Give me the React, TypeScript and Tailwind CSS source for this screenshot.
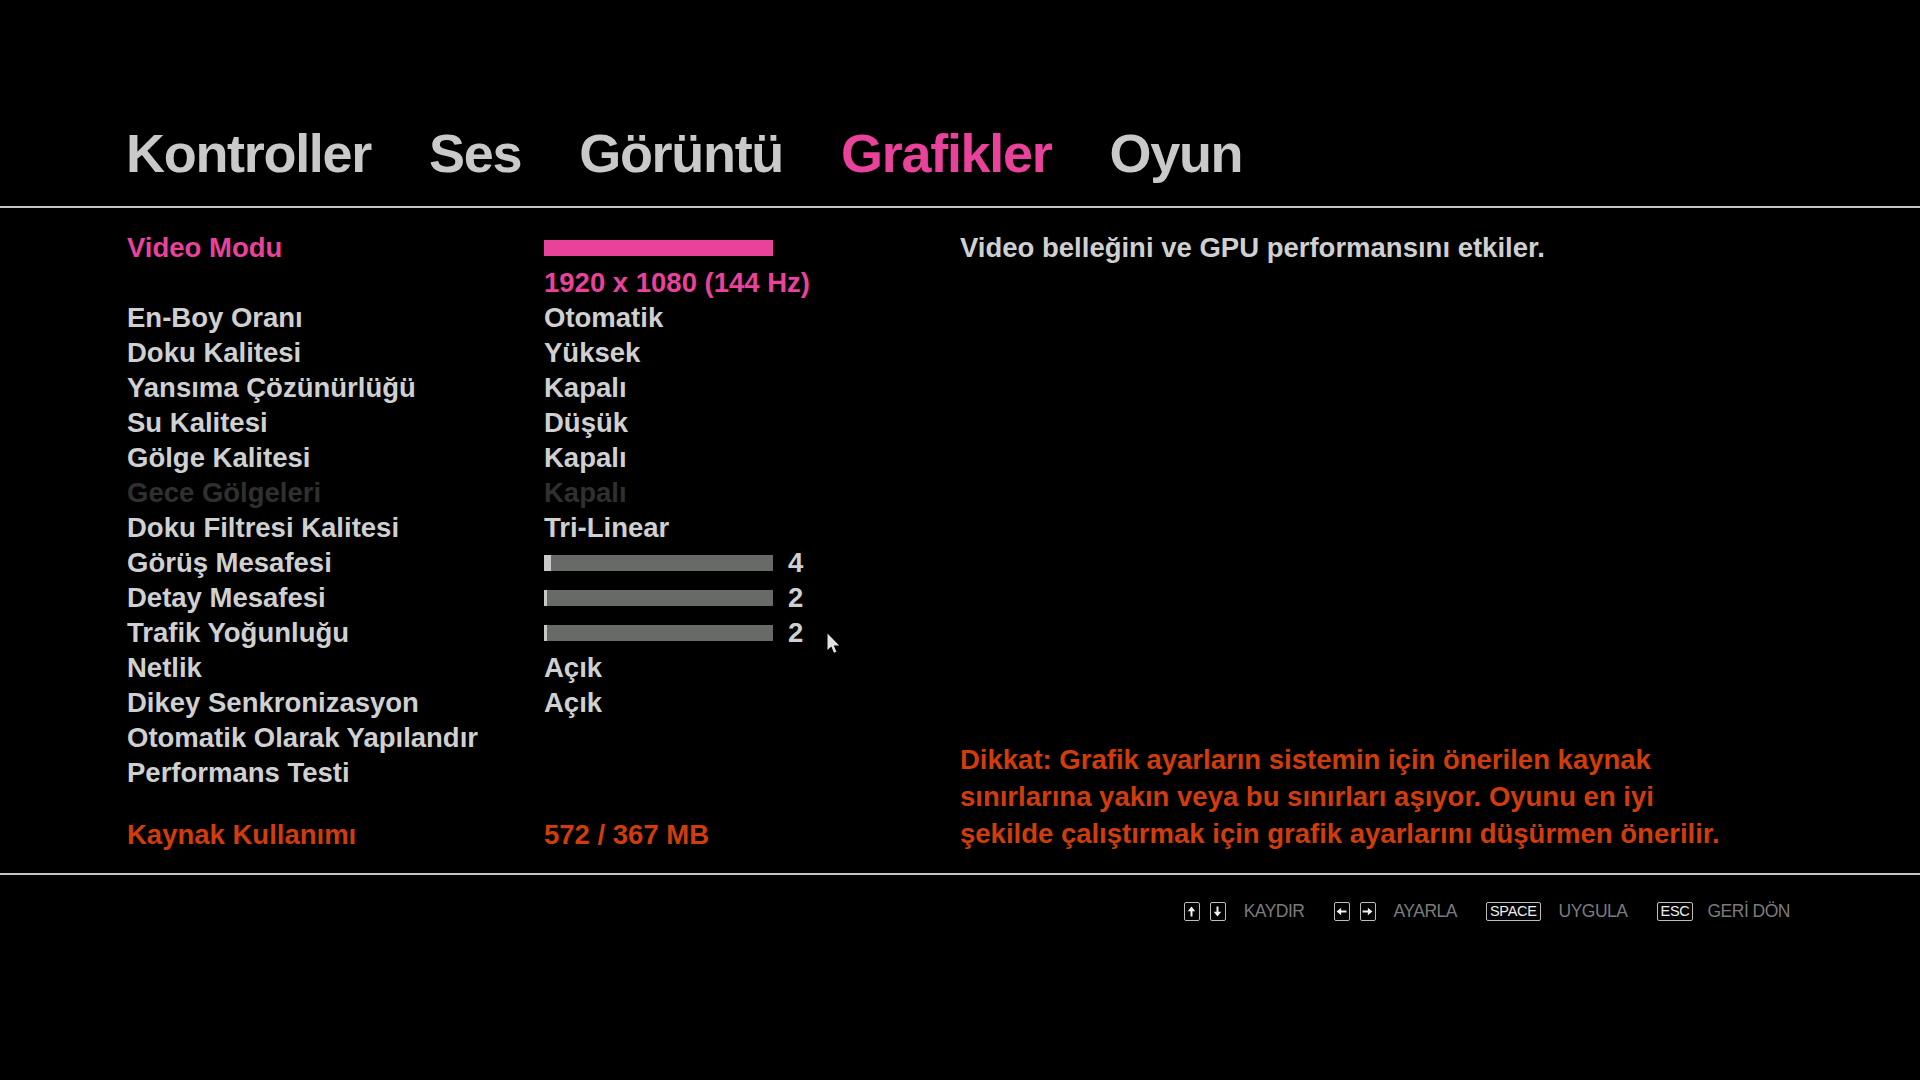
import React from "react";

type Setting = {
  label: string;
  value?: string;
  slider?: { level: number; tick: number };
  disabled?: boolean;
};

const tabs = ["Kontroller", "Ses", "Görüntü", "Grafikler", "Oyun"];
const activeTab = "Grafikler";

const settings: Setting[] = [
  { label: "En-Boy Oranı", value: "Otomatik" },
  { label: "Doku Kalitesi", value: "Yüksek" },
  { label: "Yansıma Çözünürlüğü", value: "Kapalı" },
  { label: "Su Kalitesi", value: "Düşük" },
  { label: "Gölge Kalitesi", value: "Kapalı" },
  { label: "Gece Gölgeleri", value: "Kapalı", disabled: true },
  { label: "Doku Filtresi Kalitesi", value: "Tri-Linear" },
  { label: "Görüş Mesafesi", slider: { level: 4, tick: 7 } },
  { label: "Detay Mesafesi", slider: { level: 2, tick: 3 } },
  { label: "Trafik Yoğunluğu", slider: { level: 2, tick: 3 } },
  { label: "Netlik", value: "Açık" },
  { label: "Dikey Senkronizasyon", value: "Açık" },
  { label: "Otomatik Olarak Yapılandır" },
  { label: "Performans Testi" },
];

const Arrow: React.FC<{ dir: "up" | "down" | "left" | "right" }> = ({ dir }) => {
  const rot = { up: "rotate-0", down: "rotate-180", left: "-rotate-90", right: "rotate-90" }[dir];
  return (
    <svg viewBox="0 0 10 12" className={`w-[9px] h-[11px] ${rot}`}>
      <path d="M5 0.5 L0.8 5.6 H3.9 V11.5 H6.1 V5.6 H9.2 Z" fill="#f2f2f2" />
    </svg>
  );
};

const KeyCap: React.FC<{ children: React.ReactNode; wide?: boolean }> = ({ children, wide }) => (
  <div
    className={`flex items-center justify-center h-[19px] border-[1.5px] border-[#bdbdbd] rounded-[2px] ${
      wide ? "px-[3px]" : "w-[16px]"
    }`}
  >
    {children}
  </div>
);

const Hint: React.FC<{ keys: React.ReactNode; label: string; gap?: string }> = ({ keys, label, gap }) => (
  <div className={`flex items-center ${gap ?? "gap-[18px]"}`}>
    <div className="flex items-center gap-[10px]">{keys}</div>
    <span className="text-[17.5px] leading-none tracking-[-0.5px] text-[#7b7b7b]">{label}</span>
  </div>
);

export default function App() {
  return (
    <div className="relative w-[1920px] h-[1080px] bg-black overflow-hidden font-[family-name:'Liberation_Sans',Arial,sans-serif] font-bold">
      {/* tab strip */}
      <div className="flex gap-[58px] pl-[126px] pt-[126px]">
        {tabs.map((t) => (
          <span
            key={t}
            className={`text-[54px] leading-[54px] tracking-[-1.3px] ${
              t === activeTab ? "text-[#e8429a]" : "text-[#c9c9c9]"
            }`}
          >
            {t}
          </span>
        ))}
      </div>
      <div className="mt-[26px] h-[2px] bg-[#c4c4c4]" />

      {/* settings body */}
      <div className="flex pl-[127px] pt-[22px] text-[27.5px] leading-[35px] text-[#d0d0d0]">
        <div className="w-[833px] flex flex-col">
          <div className="grid grid-cols-[417px_1fr]">
            <div className="h-[35px] flex items-center text-[#e8429a]">Video Modu</div>
            <div className="h-[35px] flex items-center">
              <div className="w-[229px] h-[16px] bg-[#e8429a]" />
            </div>
            <div className="h-[35px]" />
            <div className="h-[35px] flex items-center text-[#e8429a]">1920 x 1080 (144 Hz)</div>

            {settings.map((s) => (
              <React.Fragment key={s.label}>
                <div className={`h-[35px] flex items-center ${s.disabled ? "text-[#303030]" : ""}`}>
                  {s.label}
                </div>
                <div className={`h-[35px] flex items-center ${s.disabled ? "text-[#303030]" : ""}`}>
                  {s.slider ? (
                    <div className="flex items-center gap-[15px]">
                      <div className="w-[229px] h-[16px] bg-[#686a68] flex">
                        <div className="h-full bg-[#c8c8c8]" style={{ width: s.slider.tick }} />
                      </div>
                      <span>{s.slider.level}</span>
                    </div>
                  ) : (
                    s.value
                  )}
                </div>
              </React.Fragment>
            ))}
          </div>

          <div className="grid grid-cols-[417px_1fr] mt-[27px] text-[#d03c0c]">
            <div className="h-[35px] flex items-center">Kaynak Kullanımı</div>
            <div className="h-[35px] flex items-center">572 / 367 MB</div>
          </div>
        </div>

        <div className="flex-1 flex flex-col justify-between">
          <div className="h-[35px] flex items-center">Video belleğini ve GPU performansını etkiler.</div>
          <p className="leading-[37px] text-[#d03c0c]">
            Dikkat: Grafik ayarların sistemin için önerilen kaynak
            <br />
            sınırlarına yakın veya bu sınırları aşıyor. Oyunu en iyi
            <br />
            şekilde çalıştırmak için grafik ayarlarını düşürmen önerilir.
          </p>
        </div>
      </div>

      <div className="mt-[21px] h-[2px] bg-[#c4c4c4]" />

      {/* control hints */}
      <div className="flex justify-end items-center gap-[29px] pr-[130px] pt-[27px] font-normal">
        <Hint
          keys={
            <>
              <KeyCap>
                <Arrow dir="up" />
              </KeyCap>
              <KeyCap>
                <Arrow dir="down" />
              </KeyCap>
            </>
          }
          label="KAYDIR"
        />
        <Hint
          keys={
            <>
              <KeyCap>
                <Arrow dir="left" />
              </KeyCap>
              <KeyCap>
                <Arrow dir="right" />
              </KeyCap>
            </>
          }
          label="AYARLA"
        />
        <Hint
          keys={
            <KeyCap wide>
              <span className="text-[14.5px] leading-none tracking-[-0.3px] text-[#eeeeee]">SPACE</span>
            </KeyCap>
          }
          label="UYGULA"
        />
        <Hint
          gap="gap-[14px]"
          keys={
            <KeyCap wide>
              <span className="text-[14.5px] leading-none tracking-[-0.3px] text-[#eeeeee]">ESC</span>
            </KeyCap>
          }
          label="GERİ DÖN"
        />
      </div>

      {/* mouse pointer */}
      <svg viewBox="0 0 14 21" className="absolute left-[827px] top-[633px] w-[14px] h-[21px]">
        <path d="M0.5 0.5 V17 L4.3 13.4 L7 19.8 L9.4 18.8 L6.8 12.6 H12.2 Z" fill="#e2e2e2" />
      </svg>
    </div>
  );
}
